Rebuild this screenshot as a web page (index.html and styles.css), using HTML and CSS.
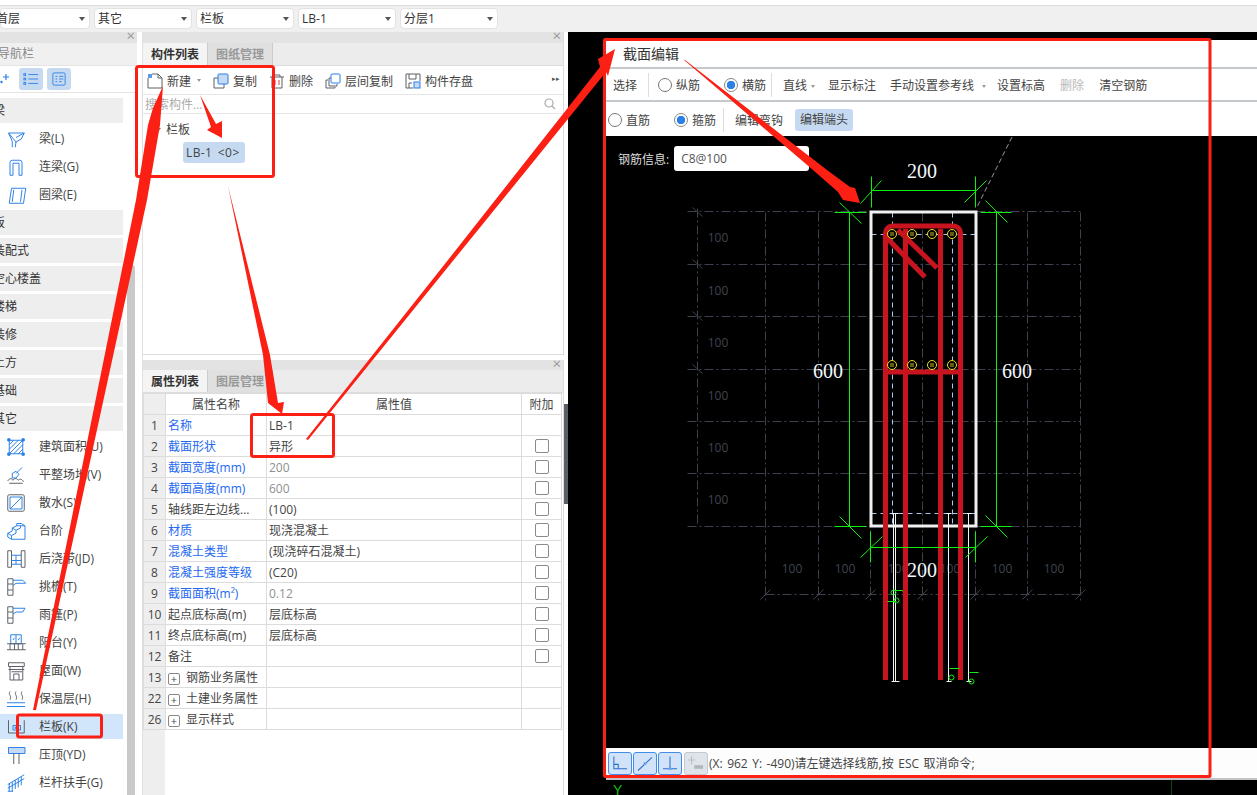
FILE: index.html
```html
<!DOCTYPE html>
<html lang="zh-CN">
<head>
<meta charset="utf-8">
<title>截面编辑</title>
<link rel="stylesheet" href="styles.css">
</head>
<body>
<div class="app">
  <header class="topbar">
    <div class="combo combo-first"><span class="combo-text clip">首层</span><i class="caret"></i></div>
    <div class="combo"><span class="combo-text">其它</span><i class="caret"></i></div>
    <div class="combo"><span class="combo-text">栏板</span><i class="caret"></i></div>
    <div class="combo"><span class="combo-text">LB-1</span><i class="caret"></i></div>
    <div class="combo"><span class="combo-text">分层1</span><i class="caret"></i></div>
  </header>
  <main class="main">
    <aside class="nav">
      <div class="dock-head"><span class="close">×</span></div>
      <div class="nav-title"><span class="clip">导航栏</span></div>
      <div class="nav-tools">
        <svg class="nav-plus" viewBox="0 0 10 12"><path d="M6 1v6M3 4h6" /><circle cx="1.5" cy="9" r="1.2"/></svg>
        <span class="nav-btn"><svg viewBox="0 0 18 14"><path d="M6 2h11M6 7h11M6 12h11"/><rect x="1" y="1" width="2" height="2"/><rect x="1" y="6" width="2" height="2"/><rect x="1" y="11" width="2" height="2"/></svg></span>
        <span class="nav-btn"><svg viewBox="0 0 16 16"><rect x="1" y="1" width="14" height="14" rx="1.5"/><path d="M4 5h2M8 5h5M4 8h2M8 8h5M4 11h2M8 11h3"/></svg></span>
      </div>
      <div class="nav-body">
        <div class="nav-list">
          <div class="group"><span class="clip">梁</span></div>
          <div class="item"><svg class="ico" viewBox="0 0 24 24"><path class="b" d="M2 4H23L19 12 12 16 11 23M2 4L7 15 7 23M2 4L12 16M23 4L12 10"/></svg>梁(L)</div>
          <div class="item"><svg class="ico" viewBox="0 0 24 24"><path class="b" d="M4 23V6a3 3 0 0 1 3-3h10a3 3 0 0 1 3 3v17h-4V7H8v16z"/></svg>连梁(G)</div>
          <div class="item"><svg class="ico" viewBox="0 0 24 24"><path class="b" d="M6 3H25L22 23H3zM9 5L7 21"/><path class="b" d="M20 5L18 21"/></svg>圈梁(E)</div>
          <div class="group"><span class="clip">板</span></div>
          <div class="group"><span class="clip">装配式</span></div>
          <div class="group"><span class="clip">空心楼盖</span></div>
          <div class="group"><span class="clip">楼梯</span></div>
          <div class="group"><span class="clip">装修</span></div>
          <div class="group"><span class="clip">土方</span></div>
          <div class="group"><span class="clip">基础</span></div>
          <div class="group"><span class="clip">其它</span></div>
          <div class="item"><svg class="ico" viewBox="0 0 24 24"><path class="b" d="M3 3h18v18H3zM3 9l6-6M3 15L15 3M3 21L21 3M9 21L21 9M15 21l6-6"/><path class="bf" d="M1 1h3v3H1zM20 1h3v3h-3zM1 20h3v3H1zM20 20h3v3h-3z"/></svg>建筑面积(U)</div>
          <div class="item"><svg class="ico" viewBox="0 0 24 24"><path class="b" d="M20 2l-8 8M7 10l5-3 4 4-4 5-5 0z"/><path class="g" d="M1 20c2-4 5-4 7-1 2-3 5-3 7 0 2-2 5-2 7 2M3 23h18"/></svg>平整场地(V)</div>
          <div class="item"><svg class="ico" viewBox="0 0 24 24"><rect class="g" x="1" y="1" width="22" height="22" rx="2"/><path class="b" d="M4 4h16v16H4zM4 20L20 4"/></svg>散水(S)</div>
          <div class="item"><svg class="ico" viewBox="0 0 24 24"><path class="b" d="M1 15l6-3V8l6-3V2l6 0 5 3v18H6l-5-3zM6 23v-5l-5-3M6 18l6-3v-4l6-3V5l6 0M12 11l-5-3M18 5l-5 0"/></svg>台阶</div>
          <div class="item"><svg class="ico" viewBox="0 0 24 24"><path class="g" d="M1 1h5v22H1zM19 1h5v22h-5z"/><path class="b" d="M6 7h13M6 14h13M12 7v7M6 19h13M12 14v5"/></svg>后浇带(JD)</div>
          <div class="item"><svg class="ico" viewBox="0 0 24 24"><path class="g" d="M1 1h7v22H1zM1 8h7M1 16h7"/><path class="b" d="M8 3h13l4 4H12l-4 3"/></svg>挑檐(T)</div>
          <div class="item"><svg class="ico" viewBox="0 0 24 24"><path class="g" d="M1 1h7v22H1zM1 8h7M1 16h7"/><path class="b" d="M8 3h16l-3 5H12l-4 3"/></svg>雨篷(P)</div>
          <div class="item"><svg class="ico" viewBox="0 0 24 24"><path class="b" d="M5 1h14v12H5zM12 1v12M8 8l2-3M15 8l2-3"/><path class="g" d="M0 13h25M0 21h25M4 13v8M10 13v8M15 13v8M21 13v8"/></svg>阳台(Y)</div>
          <div class="item"><svg class="ico" viewBox="0 0 24 24"><path class="g" d="M2 1h21v5H2zM4 6v18h17V6M2 10h21M9 24v-8h7v8"/><path class="g" d="M6 13h14"/></svg>屋面(W)</div>
          <div class="item"><svg class="ico" viewBox="0 0 24 24"><path class="g" d="M4 2c-3 4 3 6 0 11M12 2c-3 4 3 6 0 11M20 2c-3 4 3 6 0 11"/><path class="b" d="M0 17h24M0 22h24"/></svg>保温层(H)</div>
          <div class="item item-on"><svg class="ico" viewBox="0 0 24 24"><path class="g" d="M2 3v17h21V3"/><path class="b" d="M8 10h10v6H8zM11 12h3v2h-3z"/></svg>栏板(K)</div>
          <div class="item"><svg class="ico" viewBox="0 0 24 24"><path class="bl" d="M2 2h22v8H2z"/><path class="g" d="M9 10v14M16 10v14"/></svg>压顶(YD)</div>
          <div class="item"><svg class="ico" viewBox="0 0 24 24"><path class="b" d="M1 14L23 1M1 19L23 6M3 13v10M7 11v12M11 8v12M15 6v12M19 4v11M1 23h7"/></svg>栏杆扶手(G)</div>
        </div>
        <div class="nav-scroll"></div>
      </div>
    </aside>

    <section class="mid">
      <div class="panel panel-top">
        <div class="dock-head"><span class="close">×</span></div>
        <div class="tabs"><span class="tab tab-on">构件列表</span><span class="tab">图纸管理</span></div>
        <div class="tools">
          <span class="tool"><svg class="tico" viewBox="0 0 16 16"><path class="g" d="M1 5v10h14V5l-4-4H5M11 1v4h4"/><rect class="bf" x="1" y="1" width="4" height="4"/></svg>新建<i class="mini"></i></span>
          <span class="tool"><svg class="tico" viewBox="0 0 16 16"><path class="g" d="M5 5H1v10h10v-4"/><rect class="bl" x="5" y="1" width="10" height="10" rx="1"/></svg>复制</span>
          <span class="tool"><svg class="tico" viewBox="0 0 16 16"><path class="g" d="M1 4h14M5 4V2h6v2M3 4v11h10V4"/><path class="r" d="M6 7v5M10 7v5"/></svg>删除</span>
          <span class="tool"><svg class="tico" viewBox="0 0 16 16"><path class="g" d="M6 5H4v8h8v-2M3 7H1v8h9v-1"/><rect class="bo" x="6" y="1" width="9" height="9" rx="1"/></svg>层间复制</span>
          <span class="tool"><svg class="tico" viewBox="0 0 16 16"><path class="g" d="M8 15H1V1h14v7M4 1v5h7V1M4 15v-5h3"/><rect class="bl" x="9" y="9" width="6" height="6"/></svg>构件存盘</span>
          <span class="more">▸▸</span>
        </div>
        <div class="search"><span>搜索构件...</span><svg class="lens" viewBox="0 0 12 12"><circle cx="5" cy="5" r="4"/><path d="M8 8l3 3"/></svg></div>
        <div class="tree">
          <div class="tree-root"><i class="tree-caret"></i>栏板</div>
          <div class="tree-leaf"><span class="chip">LB-1 &lt;0&gt;</span></div>
        </div>
      </div>
      <div class="panel panel-bottom">
        <div class="dock-head"><span class="close">×</span></div>
        <div class="tabs"><span class="tab tab-on">属性列表</span><span class="tab">图层管理</span></div>
        <div class="grid-wrap">
          <table class="props">
            <colgroup><col class="c-n"><col class="c-k"><col class="c-v"><col class="c-x"></colgroup>
            <thead><tr><th class="num"></th><th>属性名称</th><th>属性值</th><th>附加</th></tr></thead>
            <tbody>
              <tr><td class="num">1</td><td class="link">名称</td><td>LB-1</td><td></td></tr>
              <tr><td class="num">2</td><td class="link">截面形状</td><td>异形</td><td class="chk"><i class="box"></i></td></tr>
              <tr><td class="num">3</td><td class="link">截面宽度(mm)</td><td class="dim">200</td><td class="chk"><i class="box"></i></td></tr>
              <tr><td class="num">4</td><td class="link">截面高度(mm)</td><td class="dim">600</td><td class="chk"><i class="box"></i></td></tr>
              <tr><td class="num">5</td><td>轴线距左边线...</td><td>(100)</td><td class="chk"><i class="box"></i></td></tr>
              <tr><td class="num">6</td><td class="link">材质</td><td>现浇混凝土</td><td class="chk"><i class="box"></i></td></tr>
              <tr><td class="num">7</td><td class="link">混凝土类型</td><td>(现浇碎石混凝土)</td><td class="chk"><i class="box"></i></td></tr>
              <tr><td class="num">8</td><td class="link">混凝土强度等级</td><td>(C20)</td><td class="chk"><i class="box"></i></td></tr>
              <tr><td class="num">9</td><td class="link">截面面积(m²)</td><td class="dim">0.12</td><td class="chk"><i class="box"></i></td></tr>
              <tr><td class="num">10</td><td>起点底标高(m)</td><td>层底标高</td><td class="chk"><i class="box"></i></td></tr>
              <tr><td class="num">11</td><td>终点底标高(m)</td><td>层底标高</td><td class="chk"><i class="box"></i></td></tr>
              <tr><td class="num">12</td><td>备注</td><td></td><td class="chk"><i class="box"></i></td></tr>
              <tr><td class="num">13</td><td><i class="plus">+</i>钢筋业务属性</td><td></td><td></td></tr>
              <tr><td class="num">22</td><td><i class="plus">+</i>土建业务属性</td><td></td><td></td></tr>
              <tr><td class="num">26</td><td><i class="plus">+</i>显示样式</td><td></td><td></td></tr>
            </tbody>
          </table>
        </div>
      </div>
    </section>

    <div class="split"><span class="grip"></span></div>

    <section class="stage">
      <div class="dialog">
        <div class="dlg-title">截面编辑</div>
        <div class="dlg-row row-a">
          <span class="t w-select">选择</span><i class="sep"></i>
          <label class="radio r-a"><i class="dot"></i>纵筋</label>
          <label class="radio r-b"><i class="dot dot-on"></i>横筋</label><i class="sep sep-b"></i>
          <span class="t drop">直线<i class="mini"></i></span>
          <span class="t t-show">显示标注</span>
          <span class="t t-manual">手动设置参考线<i class="mini"></i></span>
          <span class="t t-level">设置标高</span>
          <span class="t t-del">删除</span>
          <span class="t t-clear">清空钢筋</span>
        </div>
        <div class="dlg-row row-b">
          <label class="radio r-c"><i class="dot"></i>直筋</label>
          <label class="radio r-d"><i class="dot dot-on"></i>箍筋</label><i class="sep sep-c"></i>
          <span class="t t-hook">编辑弯钩</span>
          <span class="t t-end">编辑端头</span>
        </div>
        <div class="canvas">
          <div class="info"><span class="info-label">钢筋信息:</span><span class="info-input">C8@100</span></div>
          <svg class="draw" viewBox="606 136 651 612">
            <g class="grid" transform="translate(.5 .5)">
              <path d="M687 211H1080M687 264H1080M687 316H1080M687 369H1080M687 421H1080M687 473H1080M687 526H1080M765 594H1080"/>
              <path d="M697 208V526M765 212V603M818 212V603M870 212V603M922 212V603M975 212V603M1027 212V603M1080 212V603"/>
              <path class="tick" d="M692 207l10 9M692 259l10 9M692 311l10 9M692 364l10 9M760 599l10-10M813 599l10-10M865 599l10-10M917 599l10-10M970 599l10-10M1022 599l10-10M1075 599l10-10"/>
            </g>
            <g class="gtext">
              <text x="718" y="242">100</text><text x="718" y="295">100</text><text x="718" y="347">100</text><text x="718" y="400">100</text><text x="718" y="452">100</text><text x="718" y="504">100</text>
              <text x="792" y="573">100</text><text x="845" y="573">100</text><text x="898" y="573">100</text><text x="950" y="573">100</text><text x="1002" y="573">100</text><text x="1054" y="573">100</text>
            </g>
            <path class="gdash" d="M1012 137L977 207"/>
            <path class="ldash" transform="translate(.5 .5)" d="M871 234H975M892 212V526M952 212V526M871 513H975"/>
            <rect class="outline" x="871" y="212" width="105" height="314"/>
            <g class="whiteline" transform="translate(.5 .5)">
              <path d="M893 513V681M895 513V681M948 513V681M968 513V681M891 513h7M946 513h5M966 513h5M891 681h8M946 681h5M966 681h5"/>
            </g>
            <g class="rebar">
              <path d="M885.500 680V233a7 7 0 0 1 7-7H953a7 7 0 0 1 7.500 7V680"/>
              <path d="M905.500 229V680M940.500 229V680M883 372H962"/>
              <path class="thin" d="M884 235L925 277M898 230L937 268"/>
            </g>
            <g class="yel">
              <circle cx="892" cy="234" r="4.500"/><circle cx="912" cy="234" r="4.500"/><circle cx="932" cy="234" r="4.500"/><circle cx="952" cy="234" r="4.500"/>
              <circle cx="892" cy="365" r="4.500"/><circle cx="912" cy="365" r="4.500"/><circle cx="932" cy="365" r="4.500"/><circle cx="952" cy="365" r="4.500"/>
              <path d="M890 233h4M890 235h4M910 233h4M910 235h4M930 233h4M930 235h4M950 233h4M950 235h4M890 364h4M890 366h4M910 364h4M910 366h4M930 364h4M930 366h4M950 364h4M950 366h4"/>
            </g>
            <g class="dimline" transform="translate(.5 .5)">
              <path d="M871 190H975M871 176V207M975 176V207M860 203L881 180M964 202L986 180"/>
              <path d="M849 212V526M834 212H866M839 202L861 223M996 212V526M980 212H1011M985 200L1007 222"/>
              <path d="M834 526H866M839 516L861 538M980 526H1011M985 515L1007 537"/>
              <path d="M870 547H975M870 531V562M975 531V562M860 557L882 536M965 557L987 536"/>
              <path d="M893 590h9v1M887 601h9M949 668h10M969 672h9"/>
              <circle cx="893" cy="592" r="2.500"/><circle cx="896" cy="600" r="2.500"/><circle cx="951" cy="677" r="2.500"/><circle cx="971" cy="681" r="2.500"/>
            </g>
            <g class="dimtext">
              <text x="922" y="178">200</text><text x="828" y="378">600</text><text x="1017" y="378">600</text><text x="922" y="577">200</text>
            </g>
          </svg>
        </div>
        <div class="dlg-status">
          <span class="snap"><svg viewBox="0 0 24 24"><path d="M5 4v14h15M5 13h5v5"/></svg></span>
          <span class="snap"><svg viewBox="0 0 24 24"><path d="M4 20L20 5"/><rect class="sq" x="10.500" y="10.500" width="3" height="3"/></svg></span>
          <span class="snap"><svg viewBox="0 0 24 24"><path d="M12 4v14M4 18h16"/><rect class="sq" x="10.500" y="16.500" width="3" height="3"/></svg></span>
          <span class="snap snap-off"><svg viewBox="0 0 24 24"><path d="M7 4v9M3 8h8"/><rect class="off" x="10" y="14" width="10" height="4"/></svg></span>
          <span class="status-text">(X: 962 Y: -490)请左键选择线筋,按 ESC 取消命令;</span>
        </div>
      </div>
      <div class="stage-foot"><span class="axis-y">Y</span><i class="axis-line"></i></div>
    </section>
  </main>

  <svg class="marks" viewBox="0 0 1257 795">
    <rect x="136.500" y="66.500" width="137" height="110" rx="2"/>
    <rect x="604.500" y="39.500" width="605.500" height="737" rx="1"/>
    <rect x="251.500" y="414.500" width="82" height="42" rx="2"/>
    <rect x="17.500" y="715" width="84" height="22" rx="2"/>
    <polygon points="33,710 136,200 148,125 153,108 163,86 160,125 147,200 36,710"/>
    <polygon points="200,95 216,124 222,121 222,138 207,130 211,127"/>
    <polygon points="228,186 263,355 268,403 282,414 284,402 278,403 270,355"/>
    <polygon points="306,439 448,260 600,67 598,59 615,49 608,76 606,72 452,262 308,440"/>
    <polygon points="684,60 813,170 838,192 843,200 860,203 855,188 850,187 827,170 685,60"/>
  </svg>
</div>
</body>
</html>
```
FILE: styles.css
```css
* { box-sizing: border-box; }
html, body { margin: 0; padding: 0; background: #fff; }
body { font-family: "Open Sans", "Noto Sans CJK SC", sans-serif; font-size: 12px; color: #333; }
i { font-style: normal; }
svg { display: block; }

.app { position: relative; width: 1257px; height: 795px; overflow: hidden; display: flex; flex-direction: column; }

/* top bar */
.topbar { height: 27px; flex: none; margin-top: 5px; border-top: 1px solid #ddd; background: #f0f0f0; padding: 2px 0 0 0; display: flex; gap: 4px; }
.combo { width: 98px; height: 21px; background: #fff; border: 1px solid #e2e2e2; border-radius: 4px; display: flex; align-items: center; justify-content: space-between; padding: 0 4px 0 3px; line-height: 19px; }
.combo-first { width: 90px; padding-left: 0; }
.combo-first .clip { margin-left: -5px; }
.caret { width: 0; height: 0; border-left: 3px solid transparent; border-right: 3px solid transparent; border-top: 4px solid #555; }

.main { flex: 1; display: flex; min-height: 0; }

/* shared */
.dock-head { height: 11px; background: #e3e3e3; position: relative; flex: none; }
.close { position: absolute; right: 2px; top: -4px; color: #999; font-size: 15px; line-height: 15px; }

/* nav */
.nav { width: 137px; flex: none; display: flex; flex-direction: column; overflow: hidden; }
.clip { display: inline-block; margin-left: -7px; white-space: nowrap; }
.nav-title { height: 22px; line-height: 22px; background: #f0f0f0; color: #888; }
.nav-title .clip { margin-left: -2px; }
.nav-tools { height: 28px; border-bottom: 1px solid #e4e4e4; border-top: 1px solid #e4e4e4; display: flex; align-items: center; }
.nav-plus { width: 10px; height: 12px; margin-right: 9px; }
.nav-plus path { fill: none; stroke: #2a7fe8; stroke-width: 1.200; }
.nav-plus circle { fill: #2a7fe8; }
.nav-btn { width: 24px; height: 22px; background: #c5daf0; border-radius: 3px; margin-right: 4px; display: flex; align-items: center; justify-content: center; }
.nav-btn svg { width: 16px; height: 14px; fill: none; stroke: #2a7fe8; stroke-width: 1; }
.nav-body { flex: 1; display: flex; min-height: 0; padding-top: 5px; }
.nav-list { width: 123px; flex: none; display: flex; flex-direction: column; gap: 3px; }
.group { height: 25px; flex: none; line-height: 25px; background: #eee; white-space: nowrap; overflow: hidden; }
.item { height: 25px; flex: none; display: flex; align-items: center; gap: 14px; padding-left: 7px; line-height: 25px; white-space: nowrap; color: #444; }
.item-on { background: #d1e5fb; }
.ico { width: 18px; height: 18px; flex: none; overflow: visible; }
.ico path, .ico rect { fill: none; stroke-width: 1.300; }
.b, .bo { fill: none; stroke: #2a7fe8; }
.g { fill: none; stroke: #5c6066; }
.bl { fill: #c5daf5; stroke: #2a7fe8; }
.ico .bl { fill: #c5daf5; }
.ico .b { stroke: #2a7fe8; }
.ico .g { stroke: #5c6066; }
.ico .bl { stroke: #2a7fe8; }
.ico .bf { fill: #2a7fe8; stroke: #2a7fe8; }
.bf { fill: #5a9ae8; stroke: none; }
.r { fill: none; stroke: #e03a3a; }
.nav-scroll { width: 8px; margin: 167px 0 0 4px; background: #c9c9c9; border-radius: 3px 3px 0 0; }

/* middle */
.mid { width: 422px; margin-left: 5px; flex: none; display: flex; flex-direction: column; gap: 5px; border-left: 1px solid #e0e0e0; }
.panel { border-right: 1px solid #ddd; display: flex; flex-direction: column; min-height: 0; }
.panel-top { height: 323px; flex: none; border-bottom: 1px solid #ddd; }
.panel-bottom { flex: 1; }
.panel-bottom .dock-head { height: 10px; }
.tabs { height: 23px; flex: none; background: #ececec; display: flex; border-bottom: 1px solid #ddd; }
.tab { width: 65px; text-align: center; line-height: 24px; background: #e0e0e0; color: #999; font-weight: 700; border-right: 1px solid #ccc; }
.tab-on { background: #f4f4f4; color: #333; }
.tools { height: 29px; flex: none; border-bottom: 1px solid #e6e6e6; display: flex; align-items: center; padding: 1px 0 0 4px; gap: 12px; position: relative; }
.tool { display: flex; align-items: center; gap: 4px; color: #444; white-space: nowrap; }
.tico { width: 16px; height: 16px; flex: none; }
.tico path, .tico rect { stroke-width: 1; }
.mini { display: inline-block; width: 0; height: 0; margin-left: 8px; border-left: 2.500px solid transparent; border-right: 2.500px solid transparent; border-top: 3px solid #999; vertical-align: 2px; }
.tool .mini { margin-left: 2px; }
.more { position: absolute; right: 1px; top: 4px; width: 10px; height: 18px; font-size: 7px; line-height: 18px; color: #555; white-space: nowrap; }
.search { height: 19px; flex: none; border-bottom: 1px solid #e6e6e6; display: flex; align-items: center; justify-content: space-between; padding: 0 7px 0 2px; color: #aaa; }
.lens { width: 12px; height: 12px; fill: none; stroke: #aaa; stroke-width: 1.200; }
.tree { flex: 1; padding-top: 5px; }
.tree-root { height: 21px; line-height: 21px; padding-left: 12px; display: flex; align-items: center; color: #444; }
.tree-caret { width: 0; height: 0; margin-right: 5px; border-left: 3px solid transparent; border-right: 3px solid transparent; border-top: 4px solid #777; }
.tree-leaf { padding: 2px 0 0 40px; }
.chip { display: inline-block; width: 62px; height: 21px; line-height: 21px; padding-left: 3px; background: #c5daf0; border-radius: 3px; color: #444; white-space: nowrap; letter-spacing: .4px; word-spacing: 2px; }

/* table */
.grid-wrap { flex: 1; background: linear-gradient(to right, #eee 22px, #fff 22px); padding-right: 2px; }
.props { width: 418px; table-layout: fixed; border-collapse: collapse; }
.c-n { width: 22px; }
.c-k { width: 101px; }
.c-v { width: 255px; }
.c-x { width: 40px; }
.props th, .props td { height: 21px; padding: 0 0 0 2px; border: 1px solid #dcdcdc; font-weight: 400; white-space: nowrap; overflow: hidden; line-height: 19px; color: #444; }
.props th { text-align: center; padding: 0; }
.props .num { background: #eee; text-align: center; padding: 0; font-size: 12px; }
.props .link { color: #2468f0; }
.props .dim { color: #909090; }
.props .chk { text-align: center; padding: 0; }
.box { display: block; width: 14px; height: 14px; margin: 0 auto; border: 1px solid #8a8a8a; border-radius: 2px; background: #fff; }
.plus { display: inline-block; width: 12px; height: 12px; line-height: 10px; text-align: center; border: 1px solid #888; border-radius: 2px; margin-right: 6px; font-size: 11px; vertical-align: -1px; }

/* splitter */
.split { width: 4px; flex: none; padding-top: 372px; background: #fff; }
.grip { display: block; height: 100px; background: #5a6068; }

/* stage */
.stage { flex: 1; min-width: 0; background: #000; padding: 8px 0 0 38px; display: flex; flex-direction: column; }
.dialog { background: #fff; display: flex; flex-direction: column; height: 738px; flex: none; }
.dlg-title { height: 29px; flex: none; line-height: 27px; padding-left: 17px; font-size: 14px; color: #333; border-bottom: 2px solid #c6c9cc; }
.dlg-row { flex: none; display: flex; align-items: center; position: relative; color: #444; white-space: nowrap; }
.row-a { height: 33px; border-bottom: 2px solid #c6c9cc; }
.row-b { height: 34px; padding-top: 1px; }
.t { flex: none; }
.w-select { margin-left: 7px; }
.sep { width: 1px; height: 24px; background: #ddd; flex: none; }
.row-a .sep { margin-left: 11px; }
.radio { display: flex; align-items: center; gap: 4px; flex: none; }
.dot { width: 14px; height: 14px; border-radius: 50%; border: 1px solid #777; background: #fff; flex: none; }
.dot-on { border-color: #888; background: radial-gradient(circle, #2a7fe8 0, #2a7fe8 4px, #fff 4.500px); }
.r-a { margin-left: 9px; }
.r-b { margin-left: 24px; }
.row-a .sep-b { margin-left: 5px; }
.drop { margin-left: 11px; }
.drop .mini { margin-left: 4px; }
.t-show { margin-left: 13px; }
.t-manual { margin-left: 14px; }
.t-level { margin-left: 11px; }
.t-del { margin-left: 15px; color: #b8b8b8; }
.t-clear { margin-left: 15px; }
.r-c { margin-left: 2px; }
.r-d { margin-left: 24px; }
.sep-c { margin-left: 7px; }
.t-hook { margin-left: 11px; }
.t-end { margin-left: 12px; width: 58px; height: 22px; line-height: 22px; text-align: center; background: #c5daf0; border-radius: 3px; }
.canvas { flex: 1; background: #000; position: relative; min-height: 0; overflow: hidden; }
.draw { width: 651px; height: 612px; font-family: "Liberation Serif", serif; }
.info { position: absolute; left: 12px; top: 10px; display: flex; align-items: center; gap: 5px; }
.info-label { color: #ddd; }
.info-input { width: 135px; height: 25px; line-height: 25px; padding-left: 7px; background: #fff; border-radius: 3px; color: #555; }
.grid path { fill: none; stroke: #3c414d; stroke-width: 1; stroke-dasharray: 9 3 2 3; }
.grid .tick { stroke-dasharray: none; }
.gtext text { fill: #3f4450; font-family: "Open Sans", sans-serif; font-size: 12px; text-anchor: middle; }
.gdash { fill: none; stroke: #999; stroke-dasharray: 5 3; }
.ldash { fill: none; stroke: #a8c8f0; stroke-dasharray: 5 4; }
.outline { fill: none; stroke: #f0f0f0; stroke-width: 3; }
.whiteline path { fill: none; stroke: #f4f4f4; stroke-width: 1; }
.rebar path { fill: none; stroke: #c8141e; stroke-width: 5; }
.yel circle { fill: #000; stroke: #f0e020; stroke-width: 1; }
.yel path { fill: none; stroke: #c8b820; stroke-width: 1; }
.dimline path, .dimline circle { fill: none; stroke: #10f010; stroke-width: 1; }
.dimtext text { fill: #f4f8ff; font-size: 20px; text-anchor: middle; }
.dlg-status { height: 30px; flex: none; background: #fdfdfd; display: flex; align-items: center; gap: 1px; padding: 0 0 0 2px; }
.snap { width: 24px; height: 23px; background: #d2e2f8; border: 1px solid #3f8eea; border-radius: 3px; flex: none; }
.snap svg { width: 22px; height: 21px; fill: none; stroke: #2a6fc8; stroke-width: 1.200; }
.snap .sq { fill: #6aa4ea; stroke: none; }
.snap-off { background: #dfe3ea; border-color: #c4c8d0; margin-left: 1px; }
.snap-off svg { stroke: #b8bcc4; }
.snap-off .off { fill: #b0b4bc; stroke: none; }
.status-text { margin-left: 0; white-space: nowrap; color: #444; word-spacing: 1.400px; }
.stage-foot { flex: 1; border-top: 2px solid #c4c4c4; position: relative; overflow: hidden; }
.axis-y { position: absolute; left: 7px; top: 3px; color: #10c010; font-size: 14px; line-height: 15px; font-family: "Liberation Sans", sans-serif; }
.axis-line { position: absolute; left: 565px; top: 0; width: 1px; height: 20px; background: #0a4a0a; }

/* annotations */
.marks { position: absolute; left: 0; top: 0; width: 1257px; height: 795px; pointer-events: none; }
.marks rect { fill: none; stroke: #fb1f14; stroke-width: 3; }
.marks polygon { fill: #fb1f14; }
```
